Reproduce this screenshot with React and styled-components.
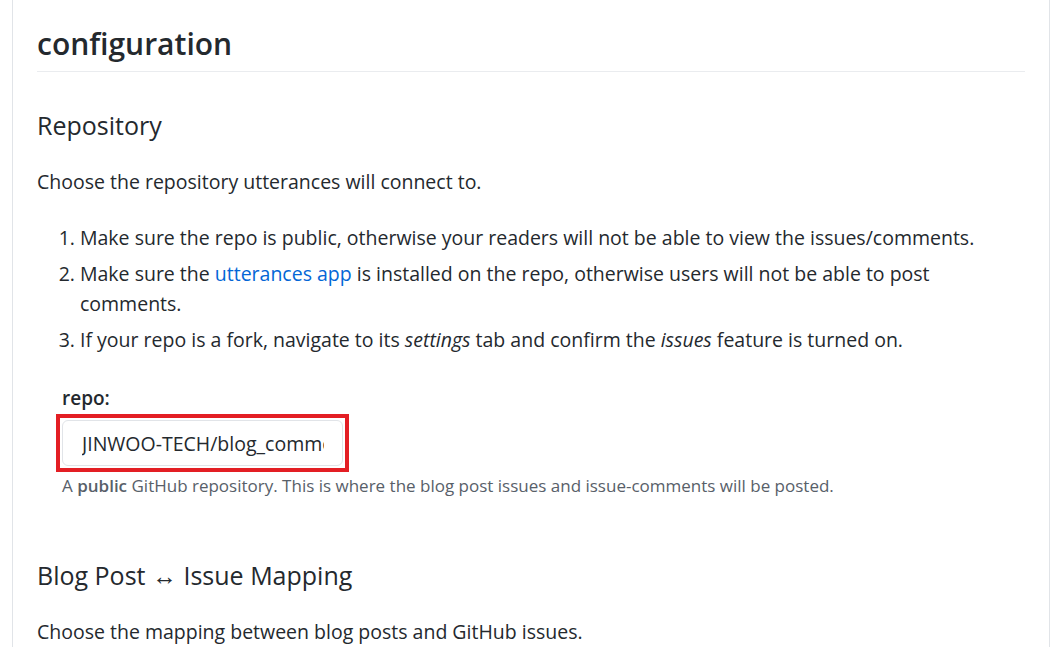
import React from "react";
import styled, { createGlobalStyle } from "styled-components";

const Global = createGlobalStyle`
  html, body {
    margin: 0;
    padding: 0;
    background: #ffffff;
    overflow: hidden;
  }
  body {
    font-family: "Open Sans", "Noto Sans", "Liberation Sans", sans-serif;
    color: #24292e;
  }
`;

const Page = styled.div`
  padding: 0 2px 0 12px;
  height: 647px;
  box-sizing: border-box;
`;

const Card = styled.main`
  border: 1px solid #e1e4e8;
  border-top: none;
  padding: 25px 24px 40px;
  min-height: 100%;
  box-sizing: border-box;
`;

const Title = styled.h1`
  margin: 0;
  font-size: 30px;
  line-height: 38px;
  font-weight: 600;
  padding-bottom: 8px;
  border-bottom: 1px solid #eaecef;
`;

const Heading = styled.h2`
  margin: ${(p) => p.$top}px 0 0;
  font-size: 25px;
  line-height: 32px;
  font-weight: 400;
`;

const Para = styled.p`
  margin: 26px 0 0;
  font-size: 19.5px;
  line-height: 30px;
`;

const List = styled.ol`
  margin: 26px 0 0;
  padding-left: 43px;
  font-size: 19.5px;
  line-height: 30px;
`;

const Item = styled.li`
  & + & {
    margin-top: 6px;
  }
`;

const Link = styled.a`
  color: #0366d6;
  text-decoration: none;
`;

const FormGroup = styled.div`
  margin: 28px 0 0 25px;
`;

const Label = styled.label`
  display: block;
  font-size: 19px;
  line-height: 30px;
  font-weight: 600;
`;

const Marked = styled.div`
  position: relative;
  margin-top: 7px;
  width: 281px;

  &::after {
    content: "";
    position: absolute;
    inset: -6px;
    border: 4px solid #e31e24;
    pointer-events: none;
  }
`;

const Input = styled.input`
  display: block;
  box-sizing: border-box;
  width: 281px;
  height: 46px;
  padding: 0 18px 0 19px;
  border: 1px solid #e1e4e8;
  border-radius: 6px;
  font-family: "Open Sans", "Noto Sans", sans-serif;
  font-size: 19.5px;
  color: #24292e;
  background: #ffffff;
  outline: none;
`;

const Note = styled.p`
  margin: 7px 0 0;
  font-size: 17px;
  line-height: 26px;
  color: #586069;

  strong {
    font-weight: 600;
  }
`;

export default function App() {
  return (
    <>
      <Global />
      <Page>
        <Card>
          <Title>configuration</Title>
          <Heading $top={37}>Repository</Heading>
          <Para>Choose the repository utterances will connect to.</Para>
          <List>
            <Item>
              Make sure the repo is public, otherwise your readers will not be
              able to view the issues/comments.
            </Item>
            <Item>
              Make sure the <Link href="#">utterances app</Link> is installed on
              the repo, otherwise users will not be able to post comments.
            </Item>
            <Item>
              If your repo is a fork, navigate to its <em>settings</em> tab and
              confirm the <em>issues</em> feature is turned on.
            </Item>
          </List>
          <FormGroup>
            <Label htmlFor="repo">repo:</Label>
            <Marked>
              <Input id="repo" type="text" defaultValue="JINWOO-TECH/blog_comments" readOnly />
            </Marked>
            <Note>
              A <strong>public</strong> GitHub repository. This is where the
              blog post issues and issue-comments will be posted.
            </Note>
          </FormGroup>
          <Heading $top={60}>Blog Post ↔ Issue Mapping</Heading>
          <Para>Choose the mapping between blog posts and GitHub issues.</Para>
        </Card>
      </Page>
    </>
  );
}
